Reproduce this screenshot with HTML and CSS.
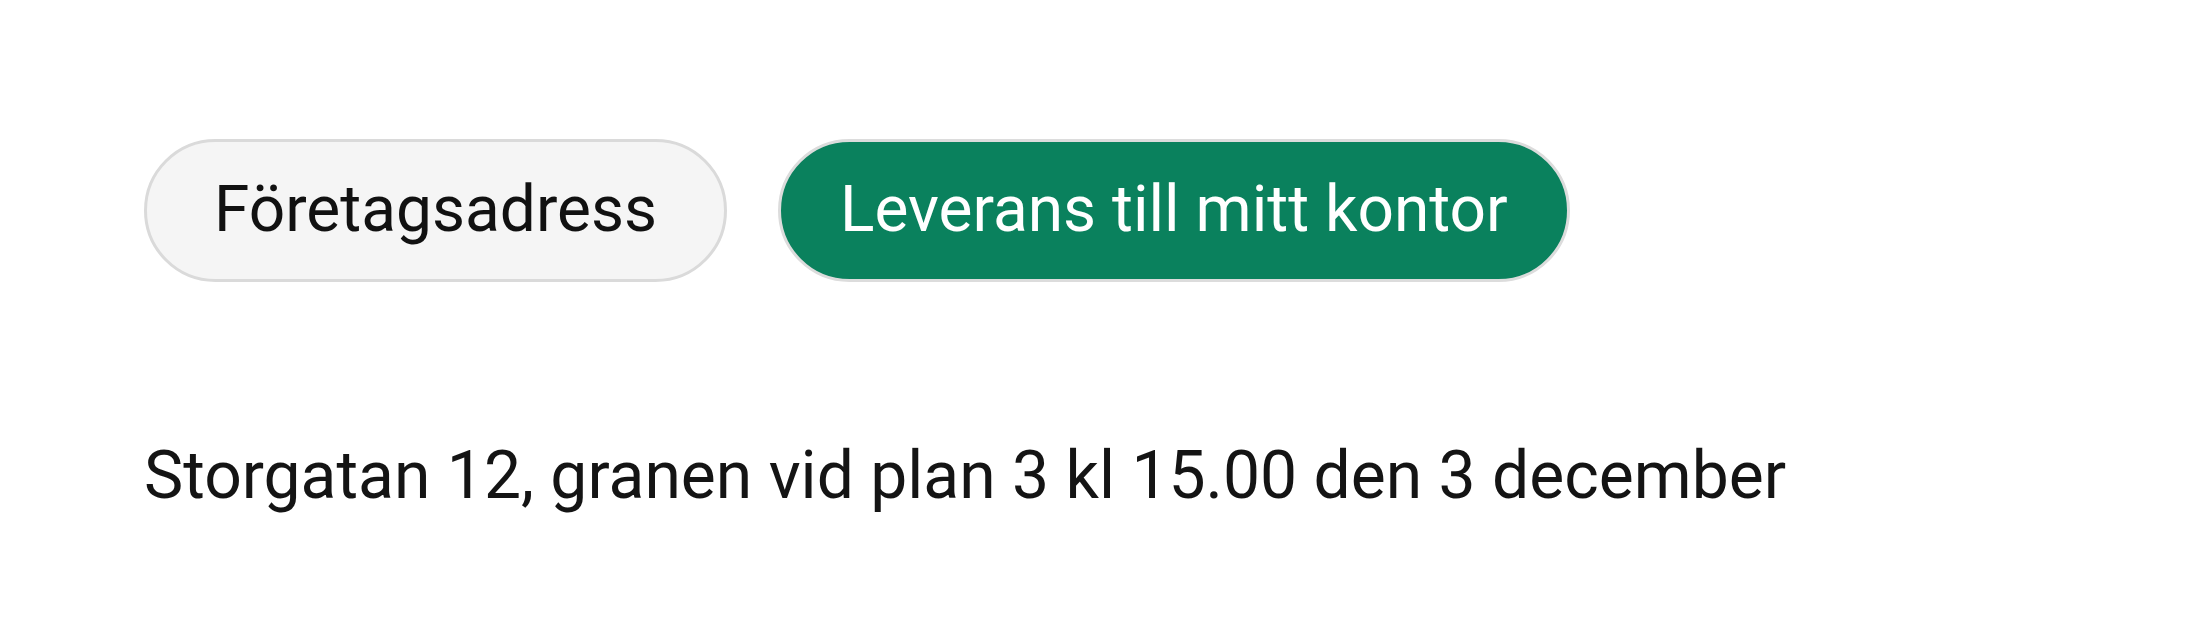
FILE: index.html
```html
<!DOCTYPE html>
<html lang="sv">
<head>
<meta charset="utf-8">
<title>Leverans</title>
<link rel="stylesheet" href="styles.css">
</head>
<body>
<main class="page">
  <div class="options">
    <button class="pill">Företagsadress</button>
    <button class="pill pill--active">Leverans till mitt kontor</button>
  </div>
  <p class="address">Storgatan 12, granen vid plan 3 kl 15.00 den 3 december</p>
</main>
</body>
</html>
```
FILE: styles.css
```css
html, body {
  margin: 0;
  padding: 0;
  background: #ffffff;
}
.page {
  padding: 139px 0 0 144px;
  font-family: Roboto, "Liberation Sans", sans-serif;
  font-weight: 400;
}
.options {
  display: flex;
  gap: 51px;
}
.pill {
  display: inline-flex;
  align-items: center;
  box-sizing: border-box;
  height: 143px;
  padding: 0 67px;
  border: 3px solid #dadada;
  border-radius: 72px;
  background: #f5f5f5;
  color: #111111;
  font-family: inherit;
  font-weight: 400;
  font-size: 64px;
  line-height: 1.2;
  cursor: pointer;
}
.pill--active {
  background: #0a815d;
  border-color: #dcdcdc;
  color: #ffffff;
  padding: 0 59px;
}
.address {
  margin: 151px 0 0 0;
  font-size: 66px;
  line-height: 1.3;
  color: #141414;
}
```
